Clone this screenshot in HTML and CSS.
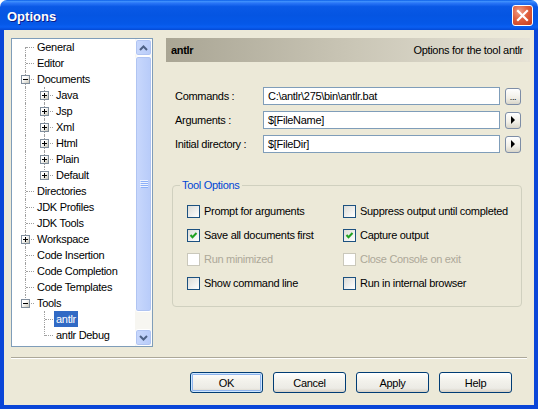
FILE: index.html
```html
<!DOCTYPE html>
<html>
<head>
<meta charset="utf-8">
<link rel="stylesheet" href="styles.css">
</head>
<body>
<div class="window">
  <div class="titlebar">
    <span class="title">Options</span>
    <div class="close">
      <svg width="19" height="19" viewBox="0 0 19 19"><path d="M5 5L14 14M14 5L5 14" stroke="#fff" stroke-width="2.2" stroke-linecap="square"/></svg>
    </div>
  </div>
  <div class="frame">
    <div class="client">
      <div class="main">
        <div class="tree">
          <div class="items">
            <div class="row"><span class="g first h"></span><span class="lbl">General</span></div>
            <div class="row"><span class="g tee h"></span><span class="lbl">Editor</span></div>
            <div class="row"><span class="g tee h"><i class="exp"></i></span><span class="lbl">Documents</span></div>
            <div class="row"><span class="g pipe"></span><span class="g tee h"><i class="exp plus"></i></span><span class="lbl">Java</span></div>
            <div class="row"><span class="g pipe"></span><span class="g tee h"><i class="exp plus"></i></span><span class="lbl">Jsp</span></div>
            <div class="row"><span class="g pipe"></span><span class="g tee h"><i class="exp plus"></i></span><span class="lbl">Xml</span></div>
            <div class="row"><span class="g pipe"></span><span class="g tee h"><i class="exp plus"></i></span><span class="lbl">Html</span></div>
            <div class="row"><span class="g pipe"></span><span class="g tee h"><i class="exp plus"></i></span><span class="lbl">Plain</span></div>
            <div class="row"><span class="g pipe"></span><span class="g last h"><i class="exp plus"></i></span><span class="lbl">Default</span></div>
            <div class="row"><span class="g tee h"></span><span class="lbl">Directories</span></div>
            <div class="row"><span class="g tee h"></span><span class="lbl">JDK Profiles</span></div>
            <div class="row"><span class="g tee h"></span><span class="lbl">JDK Tools</span></div>
            <div class="row"><span class="g tee h"><i class="exp plus"></i></span><span class="lbl">Workspace</span></div>
            <div class="row"><span class="g tee h"></span><span class="lbl">Code Insertion</span></div>
            <div class="row"><span class="g tee h"></span><span class="lbl">Code Completion</span></div>
            <div class="row"><span class="g tee h"></span><span class="lbl">Code Templates</span></div>
            <div class="row"><span class="g last h"><i class="exp"></i></span><span class="lbl">Tools</span></div>
            <div class="row"><span class="g"></span><span class="g tee h"></span><span class="lbl sel">antlr</span></div>
            <div class="row"><span class="g"></span><span class="g last h"></span><span class="lbl">antlr Debug</span></div>
          </div>
          <div class="sb">
            <div class="sbbtn"><svg width="9" height="6" viewBox="0 0 9 6"><path d="M1 5L4.5 1.5L8 5" fill="none" stroke="#4d6185" stroke-width="2"/></svg></div>
            <div class="thumb"><svg width="8" height="8" viewBox="0 0 8 8"><path d="M0 .5h8M0 2.5h8M0 4.5h8M0 6.5h8" stroke="#eef3fe"/><path d="M1 1.5h8M1 3.5h8M1 5.5h8M1 7.5h8" stroke="#8cb0f8"/></svg></div>
            <div class="track"></div>
            <div class="sbbtn"><svg width="9" height="6" viewBox="0 0 9 6"><path d="M1 1L4.5 4.5L8 1" fill="none" stroke="#4d6185" stroke-width="2"/></svg></div>
          </div>
        </div>
        <div class="panel">
          <div class="header"><b>antlr</b><span>Options for the tool antlr</span></div>
          <div class="fields">
            <div class="field"><label>Commands :</label><div class="input">C:\antlr\275\bin\antlr.bat</div><div class="sbtn dots">...</div></div>
            <div class="field"><label>Arguments :</label><div class="input">$[FileName]</div><div class="sbtn"><svg width="6" height="8" viewBox="0 0 6 8"><path d="M1 0L5 4L1 8Z" fill="#000"/></svg></div></div>
            <div class="field"><label>Initial directory :</label><div class="input">$[FileDir]</div><div class="sbtn"><svg width="6" height="8" viewBox="0 0 6 8"><path d="M1 0L5 4L1 8Z" fill="#000"/></svg></div></div>
          </div>
          <fieldset class="group">
            <legend>Tool Options</legend>
            <div class="opts">
              <div class="opt"><span class="cb"></span>Prompt for arguments</div>
              <div class="opt"><span class="cb"></span>Suppress output until completed</div>
              <div class="opt"><span class="cb"><svg width="11" height="11" viewBox="0 0 11 11"><path d="M2.5 5L4.5 7.2L8.5 3" fill="none" stroke="#21a121" stroke-width="2"/></svg></span>Save all documents first</div>
              <div class="opt"><span class="cb"><svg width="11" height="11" viewBox="0 0 11 11"><path d="M2.5 5L4.5 7.2L8.5 3" fill="none" stroke="#21a121" stroke-width="2"/></svg></span>Capture output</div>
              <div class="opt dis"><span class="cb"></span>Run minimized</div>
              <div class="opt dis"><span class="cb"></span>Close Console on exit</div>
              <div class="opt"><span class="cb"></span>Show command line</div>
              <div class="opt"><span class="cb"></span>Run in internal browser</div>
            </div>
          </fieldset>
        </div>
      </div>
      <div class="sep"></div>
      <div class="buttons">
        <div class="btn def">OK</div>
        <div class="btn">Cancel</div>
        <div class="btn">Apply</div>
        <div class="btn">Help</div>
      </div>
    </div>
  </div>
</div>
</body>
</html>
```
FILE: styles.css
```css
* { box-sizing: border-box; }
body {
  margin: 0;
  background: #fff;
  font-family: "Liberation Sans", Arial, sans-serif;
  font-size: 11px;
  letter-spacing: -0.3px;
  color: #000;
}
.window {
  width: 538px;
  height: 409px;
  display: flex;
  flex-direction: column;
}
.titlebar {
  height: 30px;
  flex: none;
  border-radius: 7px 7px 0 0;
  background: linear-gradient(#0a5fe8 0%, #3d8efc 5%, #2874f6 11%, #0a59e6 22%, #0555e2 50%, #0558e8 80%, #0a5ff2 90%, #044ad6 100%);
  display: flex;
  align-items: center;
  justify-content: space-between;
  padding: 0 5px 0 7px;
}
.title {
  color: #fff;
  font-weight: bold;
  font-size: 13px;
  letter-spacing: 0;
  text-shadow: 1px 1px #0a1c8a;
  margin-top: 2px;
}
.close {
  width: 21px;
  height: 21px;
  border: 1px solid #fff;
  border-radius: 3px;
  background: radial-gradient(circle at 35% 30%, #f0a08a 0%, #e0603e 45%, #c5391b 100%);
  display: flex;
  align-items: center;
  justify-content: center;
}
.frame {
  flex: 1;
  border: 4px solid #0a46d8;
  border-top: 0;
  background: #ece9d8;
}
.client {
  height: 100%;
  padding: 8px 4px 0 7px;
  display: flex;
  flex-direction: column;
}
.main {
  display: flex;
  gap: 13px;
  height: 309px;
  flex: none;
}
.tree {
  width: 142px;
  flex: none;
  border: 1px solid #7f9db9;
  background: #fff;
  display: flex;
}
.items {
  flex: 1;
  overflow: hidden;
}
.row {
  display: flex;
  height: 16px;
  padding-left: 4px;
}
.g {
  position: relative;
  width: 19px;
  height: 16px;
  flex: none;
}
.tee::before, .pipe::before, .first::before, .last::before {
  content: "";
  position: absolute;
  left: 9px;
  top: 0;
  height: 16px;
  border-left: 1px dotted #a0a0a0;
}
.first::before { top: 8px; height: 8px; }
.last::before { height: 9px; }
.h::after {
  content: "";
  position: absolute;
  left: 10px;
  top: 8px;
  width: 8px;
  border-top: 1px dotted #a0a0a0;
}
.exp {
  position: absolute;
  left: 5px;
  top: 4px;
  width: 9px;
  height: 9px;
  border: 1px solid #7f8d9c;
  background: linear-gradient(135deg, #fff 35%, #c9c6b8);
  z-index: 1;
}
.exp::before {
  content: "";
  position: absolute;
  left: 1px;
  top: 3px;
  width: 5px;
  height: 1px;
  background: #000;
}
.exp.plus::after {
  content: "";
  position: absolute;
  left: 3px;
  top: 1px;
  width: 1px;
  height: 5px;
  background: #000;
}
.lbl {
  padding: 0 2px;
  line-height: 16px;
  white-space: nowrap;
}
.sel {
  background: #316ac5;
  color: #fff;
}
.sb {
  width: 17px;
  flex: none;
  display: flex;
  flex-direction: column;
  background: #f7f6f1;
}
.sbbtn, .thumb {
  border: 1px solid #fff;
  border-radius: 3px;
  background: linear-gradient(90deg, #c9d8fc, #b7cbf9);
  box-shadow: inset 0 0 0 1px #b0c4f2;
  display: flex;
  align-items: center;
  justify-content: center;
}
.sbbtn { height: 17px; flex: none; }
.thumb { height: 256px; flex: none; }
.track { flex: 1; }
.panel {
  flex: 1;
  display: flex;
  flex-direction: column;
}
.header {
  height: 24px;
  flex: none;
  background: linear-gradient(90deg, #a9a594, #c9c5b5 50%, #e6e3d6);
  display: flex;
  align-items: center;
  justify-content: space-between;
  padding: 0 7px 0 5px;
}
.fields {
  margin-top: 25px;
  display: flex;
  flex-direction: column;
  gap: 6px;
}
.field {
  display: flex;
  align-items: center;
  height: 18px;
}
.field label {
  width: 97px;
  padding-left: 9px;
}
.input {
  width: 237px;
  height: 18px;
  border: 1px solid #7f9db9;
  background: #fff;
  padding: 0 4px;
  line-height: 16px;
  white-space: nowrap;
}
.sbtn {
  width: 16px;
  height: 17px;
  margin-left: 5px;
  border: 1px solid #7d8da6;
  border-radius: 3px;
  background: linear-gradient(#fff, #f1efe7 60%, #d8d5c9);
  display: flex;
  align-items: center;
  justify-content: center;
}
.sbtn.dots {
  align-items: flex-end;
  font-size: 9px;
  line-height: 11px;
  padding-bottom: 1px;
}
.group {
  margin: 26px 8px 0 6px;
  border: 1px solid #d0d0bf;
  border-radius: 4px;
  padding: 7px 0 11px 7px;
  min-width: 0;
}
.group legend {
  color: #0046d5;
  padding: 0 2px;
  line-height: 13px;
}
.opts {
  display: grid;
  grid-template-columns: 156px auto;
  grid-auto-rows: 24px;
  margin-left: 7px;
}
.opt {
  display: flex;
  align-items: center;
  gap: 4px;
  white-space: nowrap;
}
.cb {
  width: 13px;
  height: 13px;
  flex: none;
  border: 1px solid #1c5180;
  background: linear-gradient(135deg, #dcdcd7, #fff);
  display: flex;
  align-items: center;
  justify-content: center;
}
.dis { color: #aca899; }
.dis .cb {
  border-color: #cac8bb;
  background: #fff;
}
.sep {
  margin-top: 10px;
  margin-right: 3px;
  border-top: 1px solid #aca899;
  border-bottom: 1px solid #fff;
}
.buttons {
  margin-top: 13px;
  display: flex;
  justify-content: flex-end;
  gap: 10px;
  padding-right: 18px;
}
.btn {
  width: 73px;
  height: 21px;
  border: 1px solid #003c74;
  border-radius: 3px;
  background: linear-gradient(#fff, #f3f2ec 40%, #ecebe5 80%, #d6d0c5);
  display: flex;
  align-items: center;
  justify-content: center;
}
.btn.def {
  box-shadow: inset 0 0 0 1px #cee7ff, inset 0 0 0 2px #8fb4ed;
}
```
